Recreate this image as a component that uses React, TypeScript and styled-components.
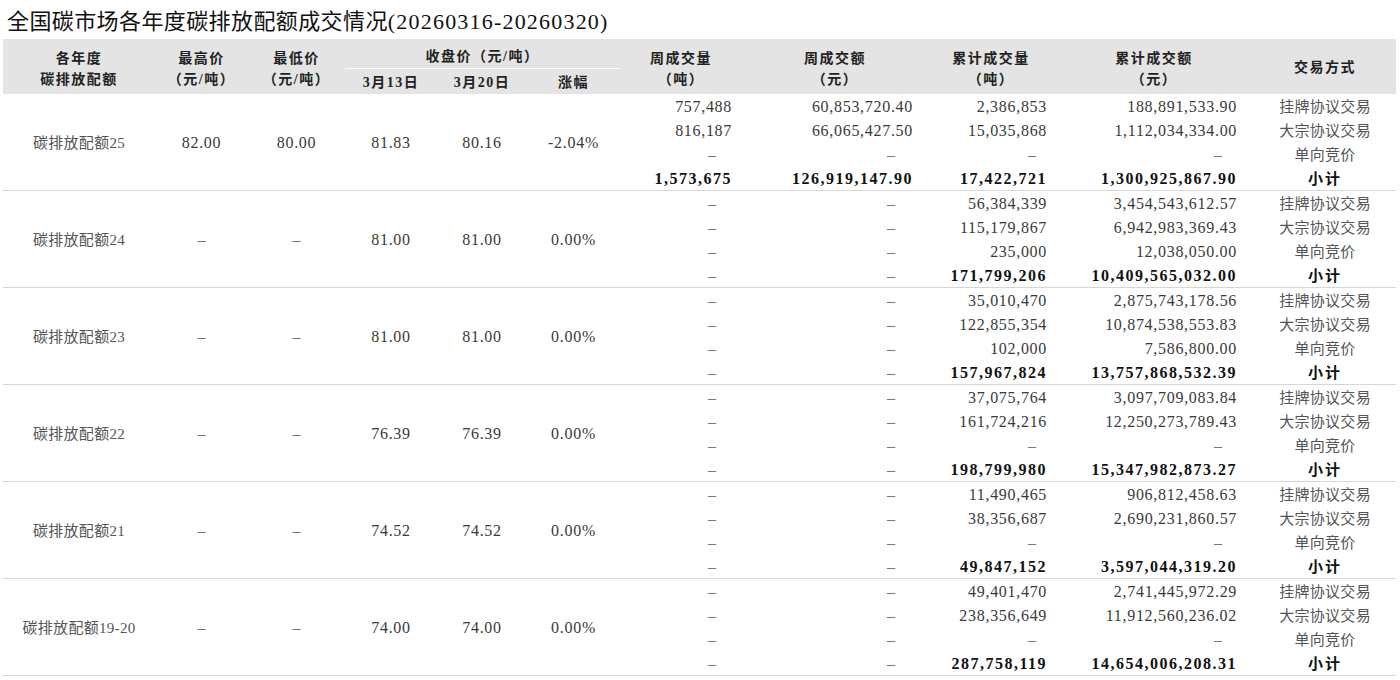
import React from "react";
import styled, { createGlobalStyle } from "styled-components";

const Global = createGlobalStyle`
  html, body { margin: 0; padding: 0; background: #fff; }
  body { font-family: "Liberation Serif", "Noto Sans CJK SC", serif; }
`;

const Page = styled.div`
  padding: 0 4px 0 3px;
  width: 1393px;
`;

const Title = styled.h1`
  margin: 0;
  height: 39px;
  box-sizing: border-box;
  padding: 7px 0 0 4px;
  font-size: 22px;
  line-height: 30px;
  font-weight: 400;
  letter-spacing: 0.4px;
  color: #111;
  white-space: nowrap;
  font-family: "Liberation Serif", "Noto Sans CJK SC", serif;
`;

const TitleDate = styled.span`
  letter-spacing: 1.2px;
`;

const Table = styled.table`
  width: 1393px;
  border-collapse: collapse;
  table-layout: fixed;
  font-family: "Liberation Serif", "Noto Sans CJK SC", serif;
`;

const Col = styled.col<{ $w: number }>`
  width: ${(p) => p.$w}px;
`;

const Head = styled.thead`
  background: #e4e4e4;
`;

const HeadRow = styled.tr<{ $h: number }>`
  height: ${(p) => p.$h}px;
`;

const Th = styled.th<{ $underline?: boolean; $pt?: number }>`
  padding: ${(p) => p.$pt ?? 0}px 0 0 0;
  font-size: 14px;
  line-height: 21px;
  font-weight: 700;
  letter-spacing: 1.5px;
  color: #222;
  text-align: center;
  vertical-align: middle;
  white-space: nowrap;
  border-bottom: ${(p) => (p.$underline ? "1px solid #ffffff" : "none")};
`;

const Group = styled.tbody`
  border-bottom: 1px solid #d6d6d6;
`;

const Row = styled.tr`
  height: 24px;
`;

const CenterCell = styled.td<{ $cjk?: boolean }>`
  padding: 2px 0 0 0;
  text-align: center;
  vertical-align: middle;
  white-space: nowrap;
  line-height: 22px;
  font-size: ${(p) => (p.$cjk ? "15px" : "16px")};
  letter-spacing: ${(p) => (p.$cjk ? "0.3px" : "0.7px")};
  color: ${(p) => (p.$cjk ? "#555" : "#3a3a3a")};
`;

const NumCell = styled.td<{ $pr: number; $bold?: boolean }>`
  padding: 2px ${(p) => p.$pr}px 0 0;
  height: 22px;
  text-align: right;
  vertical-align: middle;
  white-space: nowrap;
  font-size: 16px;
  line-height: 22px;
  font-weight: ${(p) => (p.$bold ? 700 : 400)};
  letter-spacing: ${(p) => (p.$bold ? "1.5px" : "0.7px")};
  color: ${(p) => (p.$bold ? "#111" : "#3a3a3a")};
`;

const TypeCell = styled.td<{ $bold?: boolean }>`
  padding: 2px 0 0 0;
  height: 22px;
  text-align: center;
  vertical-align: middle;
  white-space: nowrap;
  font-size: 15px;
  line-height: 22px;
  letter-spacing: ${(p) => (p.$bold ? "2px" : "0.3px")};
  font-weight: ${(p) => (p.$bold ? 700 : 400)};
  color: ${(p) => (p.$bold ? "#111" : "#555")};
`;

const Dash = styled.span`
  color: #777;
  letter-spacing: 0;
  font-weight: 400;
`;

type GroupData = {
  name: string;
  high: string;
  low: string;
  d1: string;
  d2: string;
  chg: string;
  rows: string[][];
};

const types = ["挂牌协议交易", "大宗协议交易", "单向竞价", "小计"];

const groups: GroupData[] = [
  {
    name: "碳排放配额25",
    high: "82.00",
    low: "80.00",
    d1: "81.83",
    d2: "80.16",
    chg: "-2.04%",
    rows: [
      ["757,488", "60,853,720.40", "2,386,853", "188,891,533.90"],
      ["816,187", "66,065,427.50", "15,035,868", "1,112,034,334.00"],
      ["-", "-", "-", "-"],
      ["1,573,675", "126,919,147.90", "17,422,721", "1,300,925,867.90"],
    ],
  },
  {
    name: "碳排放配额24",
    high: "-",
    low: "-",
    d1: "81.00",
    d2: "81.00",
    chg: "0.00%",
    rows: [
      ["-", "-", "56,384,339", "3,454,543,612.57"],
      ["-", "-", "115,179,867", "6,942,983,369.43"],
      ["-", "-", "235,000", "12,038,050.00"],
      ["-", "-", "171,799,206", "10,409,565,032.00"],
    ],
  },
  {
    name: "碳排放配额23",
    high: "-",
    low: "-",
    d1: "81.00",
    d2: "81.00",
    chg: "0.00%",
    rows: [
      ["-", "-", "35,010,470", "2,875,743,178.56"],
      ["-", "-", "122,855,354", "10,874,538,553.83"],
      ["-", "-", "102,000", "7,586,800.00"],
      ["-", "-", "157,967,824", "13,757,868,532.39"],
    ],
  },
  {
    name: "碳排放配额22",
    high: "-",
    low: "-",
    d1: "76.39",
    d2: "76.39",
    chg: "0.00%",
    rows: [
      ["-", "-", "37,075,764", "3,097,709,083.84"],
      ["-", "-", "161,724,216", "12,250,273,789.43"],
      ["-", "-", "-", "-"],
      ["-", "-", "198,799,980", "15,347,982,873.27"],
    ],
  },
  {
    name: "碳排放配额21",
    high: "-",
    low: "-",
    d1: "74.52",
    d2: "74.52",
    chg: "0.00%",
    rows: [
      ["-", "-", "11,490,465", "906,812,458.63"],
      ["-", "-", "38,356,687", "2,690,231,860.57"],
      ["-", "-", "-", "-"],
      ["-", "-", "49,847,152", "3,597,044,319.20"],
    ],
  },
  {
    name: "碳排放配额19-20",
    high: "-",
    low: "-",
    d1: "74.00",
    d2: "74.00",
    chg: "0.00%",
    rows: [
      ["-", "-", "49,401,470", "2,741,445,972.29"],
      ["-", "-", "238,356,649", "11,912,560,236.02"],
      ["-", "-", "-", "-"],
      ["-", "-", "287,758,119", "14,654,006,208.31"],
    ],
  },
];

const colWidths = [152, 93, 97, 92, 90, 93, 122, 186, 126, 200, 142];
const valuePad = [10, 15, 7, 17];
const dashPad = [26, 33, 18, 32];

const Cell = ({ v }: { v: string }) => (v === "-" ? <Dash>–</Dash> : <>{v}</>);

export default function App() {
  return (
    <Page>
      <Global />
      <Title>
        全国碳市场各年度碳排放配额成交情况<TitleDate>(20260316-20260320)</TitleDate>
      </Title>
      <Table>
        <colgroup>
          {colWidths.map((w, i) => (
            <Col key={i} $w={w} />
          ))}
        </colgroup>
        <Head>
          <HeadRow $h={29}>
            <Th rowSpan={2} $pt={4}>
              各年度
              <br />
              碳排放配额
            </Th>
            <Th rowSpan={2} $pt={4}>
              最高价
              <br />
              （元/吨）
            </Th>
            <Th rowSpan={2} $pt={4}>
              最低价
              <br />
              （元/吨）
            </Th>
            <Th colSpan={3} $underline $pt={6}>
              收盘价（元/吨）
            </Th>
            <Th rowSpan={2} $pt={4}>
              周成交量
              <br />
              （吨）
            </Th>
            <Th rowSpan={2} $pt={4}>
              周成交额
              <br />
              （元）
            </Th>
            <Th rowSpan={2} $pt={4}>
              累计成交量
              <br />
              （吨）
            </Th>
            <Th rowSpan={2} $pt={4}>
              累计成交额
              <br />
              （元）
            </Th>
            <Th rowSpan={2} $pt={2}>
              交易方式
            </Th>
          </HeadRow>
          <HeadRow $h={26}>
            <Th $pt={3}>3月13日</Th>
            <Th $pt={3}>3月20日</Th>
            <Th $pt={3}>涨幅</Th>
          </HeadRow>
        </Head>
        {groups.map((g) => (
          <Group key={g.name}>
            {g.rows.map((r, ri) => {
              const bold = ri === 3;
              return (
                <Row key={ri}>
                  {ri === 0 && (
                    <>
                      <CenterCell rowSpan={4} $cjk>
                        {g.name}
                      </CenterCell>
                      <CenterCell rowSpan={4}>
                        <Cell v={g.high} />
                      </CenterCell>
                      <CenterCell rowSpan={4}>
                        <Cell v={g.low} />
                      </CenterCell>
                      <CenterCell rowSpan={4}>{g.d1}</CenterCell>
                      <CenterCell rowSpan={4}>{g.d2}</CenterCell>
                      <CenterCell rowSpan={4}>{g.chg}</CenterCell>
                    </>
                  )}
                  {r.map((v, ci) => (
                    <NumCell
                      key={ci}
                      $pr={v === "-" ? dashPad[ci] : valuePad[ci]}
                      $bold={bold && v !== "-"}
                    >
                      <Cell v={v} />
                    </NumCell>
                  ))}
                  <TypeCell $bold={bold}>{types[ri]}</TypeCell>
                </Row>
              );
            })}
          </Group>
        ))}
      </Table>
    </Page>
  );
}
